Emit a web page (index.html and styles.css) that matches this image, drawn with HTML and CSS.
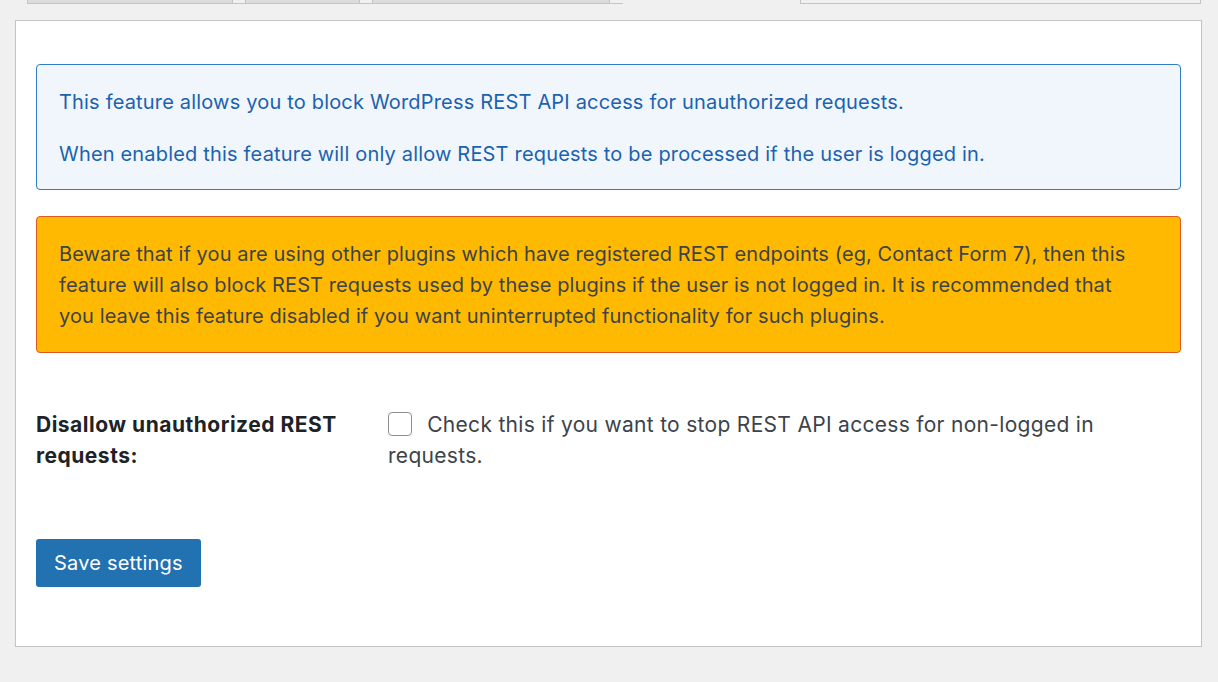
FILE: index.html
```html
<!DOCTYPE html>
<html>
<head>
  <meta charset="UTF-8">
  <meta name="viewport" content="width=device-width, initial-scale=1.0">
  <title>REST API Settings</title>
  <link rel="stylesheet" href="styles.css">
</head>
<body>
  <div class="tabs">
    <div class="tabs-left">
      <span class="tab tab-first"></span>
      <span class="tab tab-a"></span>
      <span class="tab tab-b"></span>
      <span class="tab tab-c"></span>
    </div>
    <span class="tab-right"></span>
  </div>

  <div class="panel">
    <div class="notice notice-info">
      <p>This feature allows you to block WordPress REST API access for unauthorized requests.</p>
      <p>When enabled this feature will only allow REST requests to be processed if the user is logged in.</p>
    </div>

    <div class="notice notice-warn">
      <p>Beware that if you are using other plugins which have registered REST endpoints (eg, Contact Form 7), then this feature will also block REST requests used by these plugins if the user is not logged in. It is recommended that you leave this feature disabled if you want uninterrupted functionality for such plugins.</p>
    </div>

    <div class="form-row">
      <label class="form-label" for="disallow_rest">Disallow unauthorized REST requests:</label>
      <div class="form-field">
        <input id="disallow_rest" class="check" type="checkbox">
        <span class="desc">Check this if you want to stop REST API access for non-logged in requests.</span>
      </div>
    </div>

    <button class="btn-primary">Save settings</button>
  </div>
</body>
</html>
```

FILE: styles.css
```css
* {
  padding: 0;
  margin: 0;
  box-sizing: border-box;
}
body {
  background: #f0f0f1;
  font-family: Inter, "Noto Sans", sans-serif;
  font-size: 20px;
  color: #3c434a;
}
.tabs {
  display: flex;
  height: 20px;
  padding-left: 15px;
}
.tabs-left {
  display: flex;
  height: 4px;
  width: 608px;
  border-bottom: 1px solid #c3c4c7;
}
.tab {
  height: 4px;
  border: 1px solid #c3c4c7;
  border-top: 0;
  background: #dcdcde;
  margin-right: 12px;
}
.tab-first {
  width: 12px;
  margin-right: 0;
  background: #f0f0f1;
  border: 0;
}
.tab-a { width: 206px; }
.tab-b { width: 115px; }
.tab-c { width: 238px; margin-right: 0; }
.tab-right {
  width: 401px;
  height: 4px;
  margin-left: 177px;
  border: 1px solid #c3c4c7;
  border-top: 0;
}
.panel {
  width: 1187px;
  margin-left: 15px;
  background: #fff;
  border: 1px solid #c3c4c7;
  box-shadow: 0 1px 1px rgba(0, 0, 0, 0.06);
  padding: 43px 20px 59px;
}
.notice {
  border-radius: 4px;
  border: 1px solid;
}
.notice-info {
  display: flex;
  flex-direction: column;
  gap: 26px;
  padding: 24px 22px 22px;
  background: #f0f6fc;
  border-color: #2f7cc8;
  color: #1b62b0;
  letter-spacing: 0.18px;
  line-height: 26px;
}
.notice-warn {
  margin-top: 26px;
  padding: 22px 45px 20px 22px;
  background: #ffb900;
  border-color: #dd5a22;
  letter-spacing: 0.1px;
  line-height: 31px;
}
.form-row {
  display: flex;
  margin-top: 56px;
  font-size: 21px;
  line-height: 31px;
}
.form-label {
  width: 352px;
  flex: none;
  font-weight: 700;
  letter-spacing: 0.5px;
  color: #1d2327;
  padding-right: 40px;
}
.form-field {
  max-width: 720px;
  letter-spacing: 0.3px;
}
.check {
  appearance: none;
  width: 24px;
  height: 24px;
  border: 1px solid #8c8f94;
  border-radius: 4px;
  background: #fff;
  vertical-align: -4px;
  margin-right: 9px;
}
.btn-primary {
  margin-top: 68px;
  height: 48px;
  padding: 0 18px;
  background: #2271b1;
  color: #fff;
  border: 0;
  border-radius: 3px;
  font-family: inherit;
  font-size: 20px;
  letter-spacing: 0.2px;
  cursor: pointer;
}
```
